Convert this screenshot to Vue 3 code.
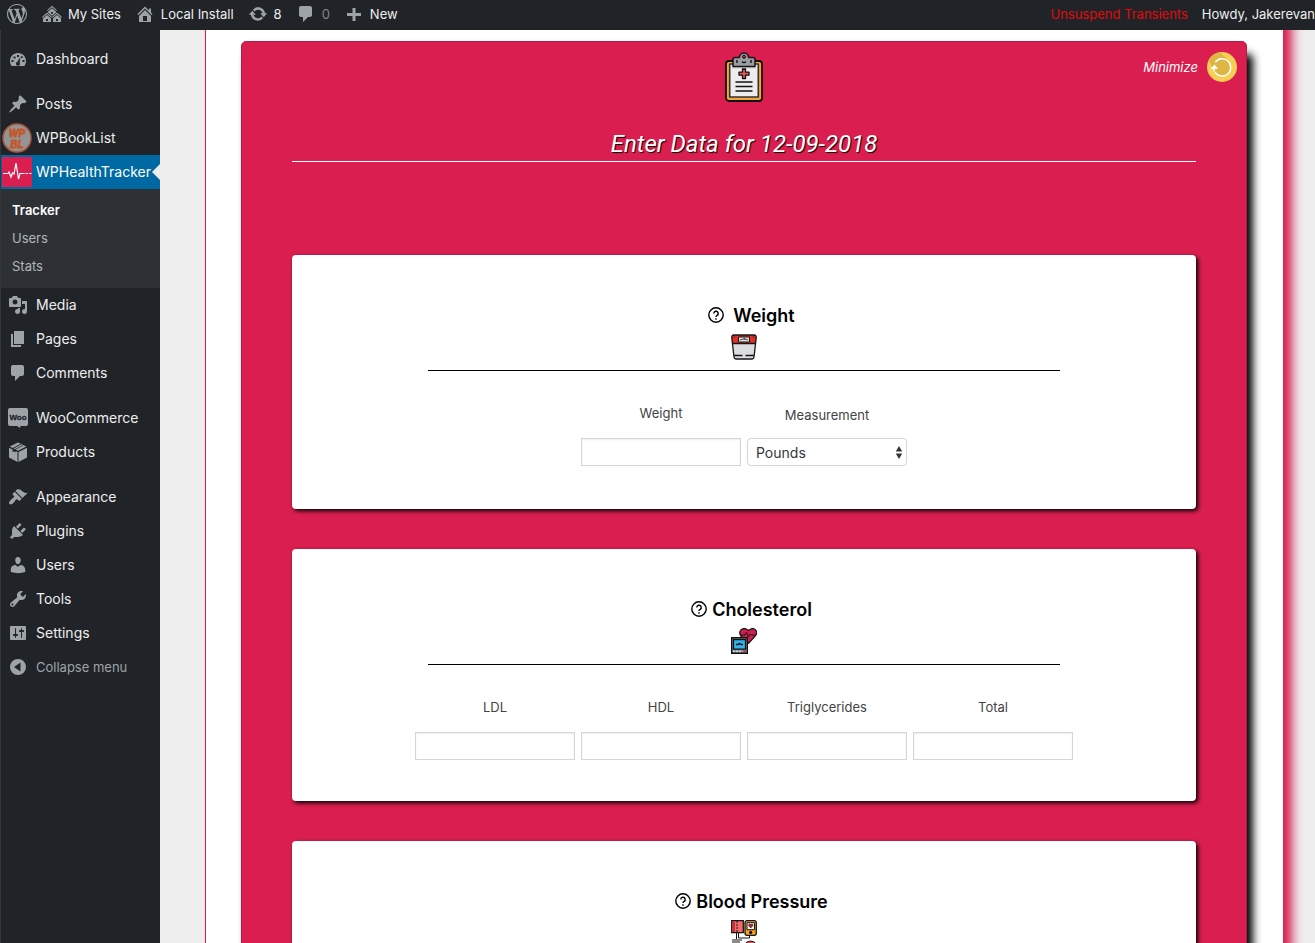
<script setup>
import { ref } from 'vue'

const paths = {
  wordpress: 'M20 10c0-5.51-4.49-10-10-10C4.48 0 0 4.49 0 10c0 5.52 4.48 10 10 10 5.51 0 10-4.48 10-10zM7.78 15.37L4.37 6.22c.55-.02 1.17-.08 1.17-.08.5-.06.44-1.13-.06-1.11 0 0-1.45.11-2.37.11-.18 0-.37 0-.58-.01C4.12 2.69 6.87 1.11 10 1.11c2.33 0 4.45.87 6.05 2.34-.68-.11-1.65.39-1.65 1.58 0 .74.45 1.36.9 2.1.35.61.55 1.36.55 2.46 0 1.49-1.4 5-1.4 5l-3.03-8.37c.54-.02.82-.17.82-.17.5-.05.44-1.25-.06-1.22 0 0-1.44.12-2.38.12-.87 0-2.33-.12-2.33-.12-.5-.03-.56 1.2-.06 1.22l.92.08 1.26 3.41zM17.41 10c.24-.64.74-1.87.43-4.25.7 1.29 1.05 2.71 1.05 4.25 0 3.29-1.73 6.24-4.4 7.78.97-2.59 1.94-5.2 2.92-7.78zM6.1 18.09C3.12 16.65 1.11 13.53 1.11 10c0-1.3.23-2.48.72-3.59C3.25 10.3 4.67 14.2 6.1 18.09zm4.03-6.63l2.58 6.98c-.86.29-1.76.45-2.71.45-.79 0-1.57-.11-2.29-.33.81-2.38 1.62-4.74 2.42-7.1z',
  sites: 'M14.27 6.87L10 3.14 5.73 6.87 5 6.14l5-4.38 5 4.38zM14 8.42l-4.05 3.43L6 8.38v-.74l4-3.5 4 3.5v.78zM11 9.7V8H9v1.7h2zm-1.73 4.03L5 10 .73 13.73 0 13l5-4.38L10 13zm10 0L15 10l-4.27 3.73L10 13l5-4.38L20 13zM5 11l4 3.5V18H1v-3.5zm10 0l4 3.5V18h-8v-3.5zm-9 6v-2H4v2h2zm10 0v-2h-2v2h2z',
  home: 'M16 8.5l1.53 1.53-1.06 1.06L10 4.6l-6.47 6.49-1.06-1.06L10 2.5l4 4v-2h2v4zm-6-2.46l6 5.99V18H4v-5.97zM12 17v-5H8v5h4z',
  update: 'M10.2 3.28c3.53 0 6.43 2.61 6.92 6h2.08l-3.5 4-3.5-4h2.32c-.45-1.97-2.21-3.45-4.32-3.45-1.45 0-2.73.71-3.54 1.78L4.95 5.66C6.23 4.2 8.11 3.28 10.2 3.28zm-.4 13.44c-3.52 0-6.43-2.61-6.92-6H.8l3.5-4c1.17 1.33 2.33 2.67 3.5 4H5.48c.45 1.97 2.21 3.45 4.32 3.45 1.45 0 2.73-.71 3.54-1.78l1.71 1.95c-1.28 1.46-3.15 2.38-5.25 2.38z',
  comments: 'M5 2h9c1.1 0 2 .9 2 2v7c0 1.1-.9 2-2 2h-2l-5 5v-5H5c-1.1 0-2-.9-2-2V4c0-1.1.9-2 2-2z',
  plus: 'M17 9v3h-5.500v5h-3v-5H3V9h5.500V4h3v5z',
  dashboard: 'M3.760 17h12.480c1.100-1.370 1.760-3.110 1.760-5 0-4.420-3.580-8-8-8s-8 3.580-8 8c0 1.890.66 3.630 1.760 5zM9 6h2v2H9zM5.500 7.600h2v2h-2zM12.900 7.300h1.800v1.800h-1.800zM3.500 11h2v2h-2zM14.500 11h2v2h-2zM12.300 8l-.6 5.700a2 2 0 1 1-2.300-.9z',
  posts: 'M10.44 3.02l1.82-1.82 6.36 6.35-1.83 1.82c-1.05-.68-2.48-.57-3.41.36l-.75.75c-.92.93-1.04 2.35-.35 3.41l-1.83 1.82-2.41-2.41-2.8 2.79c-.42.42-3.38 2.71-3.8 2.29s1.86-3.39 2.28-3.81l2.79-2.79L4.1 9.36l1.83-1.82c1.05.69 2.48.57 3.4-.36l.75-.75c.93-.92 1.05-2.35.36-3.41z',
  media: 'M13 11V4c0-.55-.45-1-1-1h-1.67L9 1H5L3.67 3H2c-.55 0-1 .45-1 1v7c0 .55.45 1 1 1h10c.55 0 1-.45 1-1zM7 4.5c1.38 0 2.5 1.12 2.5 2.5S8.38 9.5 7 9.5 4.5 8.38 4.5 7 5.62 4.5 7 4.5zM14 6h5v10.5c0 1.38-1.12 2.5-2.5 2.5S14 17.88 14 16.5s1.12-2.5 2.5-2.5c.17 0 .34.02.5.05V9h-3V6zm-4 8.05V13h2v3.5c0 1.38-1.12 2.5-2.5 2.5S7 17.88 7 16.5 8.12 14 9.5 14c.17 0 .34.02.5.05z',
  pages: 'M6 15V2h10v13H6zm-1 1h8v2H3V5h2v11z',
  products: 'M10 .5l8.300 4.100L10 8.800 7.700 7.600l7.600-4-.9-.4-7.600 4-1.200-.6 7.600-4-.9-.5-7.600 4L1.700 4.600zM1 5.700l3.600 1.800v2.700l1.300-.9 1.300.9.900-.9 1.400.7V20L1 15.500zM19 5.700v9.800L10.500 20v-10z',
  appearance: 'M14.48 11.06L7.41 3.99l1.5-1.5c.5-.56 2.3-.47 3.51.32 1.21.8 1.43 1.28 2.91 2.1 1.18.64 2.45 1.26 4.45.85zm-.71.71L6.7 4.7 4.93 6.47c-.39.39-.39 1.02 0 1.41l1.06 1.06c.39.39.39 1.03 0 1.42-.6.6-1.43 1.11-2.21 1.69-.35.26-.7.53-1.01.84C1.43 14.23.4 16.08 1.4 17.07c.99 1 2.84-.03 4.18-1.36.31-.31.58-.66.85-1.02.57-.78 1.08-1.61 1.69-2.21.39-.39 1.02-.39 1.41 0l1.06 1.06c.39.39 1.02.39 1.41 0z',
  plugins: 'M13.11 4.36L9.87 7.6 8 5.73l3.24-3.24c.35-.34 1.05-.2 1.56.32.52.51.66 1.21.31 1.55zm-8 1.77l.91-1.12 9.01 9.01-1.19.84c-.71.71-2.63 1.16-3.82 1.16H6.14L4.9 17.26c-.59.59-1.54.59-2.12 0-.59-.58-.59-1.53 0-2.12l1.24-1.24v-3.88c0-1.13.4-3.19 1.09-3.89zm7.26 3.97l3.24-3.24c.34-.35 1.04-.21 1.55.31.52.51.66 1.21.31 1.55l-3.24 3.25z',
  users: 'M10 9.25c-2.27 0-2.73-3.44-2.73-3.44C7 4.02 7.82 2 9.97 2c2.16 0 2.98 2.02 2.71 3.81 0 0-.41 3.44-2.68 3.44zm0 2.57L12.72 10c2.39 0 4.52 2.33 4.52 4.53v2.49s-3.65 1.13-7.24 1.13c-3.65 0-7.24-1.13-7.24-1.13v-2.49c0-2.25 1.94-4.48 4.47-4.48z',
  tools: 'M16.68 9.77c-1.34 1.34-3.3 1.67-4.95.99l-5.41 6.52c-.99.99-2.59.99-3.58 0s-.99-2.59 0-3.57l6.52-5.42c-.68-1.65-.35-3.61.99-4.95 1.28-1.28 3.12-1.62 4.72-1.06l-2.89 2.89 2.82 2.82 2.86-2.87c.53 1.58.18 3.39-1.08 4.65zM3.81 16.21c.4.39 1.04.39 1.43 0 .4-.4.4-1.04 0-1.43-.39-.4-1.03-.4-1.43 0-.39.39-.39 1.03 0 1.43z',
  settings: 'M18 16V4c0-.55-.45-1-1-1H3c-.55 0-1 .45-1 1v12c0 .55.45 1 1 1h14c.55 0 1-.45 1-1zM8 11h1c.55 0 1 .45 1 1s-.45 1-1 1H8v1.5c0 .28-.22.5-.5.5s-.5-.22-.5-.5V13H6c-.55 0-1-.45-1-1s.45-1 1-1h1V5.5c0-.28.22-.5.5-.5s.5.22.5.5V11zm5-2h-1c-.55 0-1-.45-1-1s.45-1 1-1h1V5.5c0-.28.22-.5.5-.5s.5.22.5.5V7h1c.55 0 1 .45 1 1s-.45 1-1 1h-1v5.5c0 .28-.22.5-.5.5s-.5-.22-.5-.5V9z',
  collapse: 'M10 2a8 8 0 1 0 0 16 8 8 0 0 0 0-16zM12.500 5.500v9L6 10z',
}

const menu = [
  [{ label: 'Dashboard', icon: 'dashboard' }],
  [
    { label: 'Posts', icon: 'posts' },
    { label: 'WPBookList', icon: 'booklist' },
    { label: 'WPHealthTracker', icon: 'health', sub: ['Tracker', 'Users', 'Stats'] },
    { label: 'Media', icon: 'media' },
    { label: 'Pages', icon: 'pages' },
    { label: 'Comments', icon: 'comments' },
  ],
  [
    { label: 'WooCommerce', icon: 'woo' },
    { label: 'Products', icon: 'products' },
  ],
  [
    { label: 'Appearance', icon: 'appearance' },
    { label: 'Plugins', icon: 'plugins' },
    { label: 'Users', icon: 'users' },
    { label: 'Tools', icon: 'tools' },
    { label: 'Settings', icon: 'settings' },
  ],
]

const lipids = ref([
  { id: 'ldl', label: 'LDL', value: '' },
  { id: 'hdl', label: 'HDL', value: '' },
  { id: 'triglycerides', label: 'Triglycerides', value: '' },
  { id: 'total', label: 'Total', value: '' },
])
const weight = ref('')
const unit = ref('Pounds')
</script>

<template>
  <div class="page">
    <header class="adminbar">
      <nav class="bar-group" aria-label="Toolbar">
        <a href="#" class="bar-item logo" aria-label="WordPress"><svg class="glyph" viewBox="0 0 20 20"><path :d="paths.wordpress" /></svg></a>
        <a href="#" class="bar-item"><svg class="glyph" viewBox="0 0 20 20"><path :d="paths.sites" /></svg>My Sites</a>
        <a href="#" class="bar-item"><svg class="glyph" viewBox="0 0 20 20"><path :d="paths.home" /></svg>Local Install</a>
        <a href="#" class="bar-item"><svg class="glyph" viewBox="0 0 20 20"><path :d="paths.update" /></svg>8</a>
        <a href="#" class="bar-item faded"><svg class="glyph" viewBox="0 0 20 20"><path :d="paths.comments" /></svg>0</a>
        <a href="#" class="bar-item"><svg class="glyph" viewBox="0 0 20 20"><path :d="paths.plus" /></svg>New</a>
      </nav>
      <nav class="bar-group" aria-label="Account">
        <a href="#" class="bar-item alert">Unsuspend Transients</a>
        <a href="#" class="bar-item account">Howdy, Jakerevan</a>
      </nav>
    </header>

    <div class="body">
      <aside class="sidebar">
        <ul v-for="(group, g) in menu" :key="g" class="menu">
          <li v-for="item in group" :key="item.label">
            <a href="#" class="menu-item" :class="{ active: item.sub }">
              <span class="menu-icon">
                <svg v-if="item.icon === 'booklist'" class="badge" viewBox="0 0 30 30">
                  <circle cx="15" cy="15" r="14" fill="#929496" stroke="#a9583a" stroke-width="1.500" />
                  <g fill="#c5562a" stroke="#c5562a" stroke-width=".8" font-family="Liberation Sans, sans-serif" font-size="10" font-weight="bold" font-style="italic" text-anchor="middle">
                    <text x="15" y="13.500">WP</text>
                    <text x="15" y="25">BL</text>
                  </g>
                </svg>
                <svg v-else-if="item.icon === 'health'" class="badge" viewBox="0 0 30 30">
                  <rect width="30" height="30" fill="#da1f50" />
                  <path d="M1 16.500h5l1-1.500 2 5 1.500-4 1.500 1 2-11 2.500 16 1.500-5.500h2" fill="none" stroke="#fff" stroke-width="1.200" />
                  <path d="M20 16.500h10" stroke="#fff" stroke-dasharray="2.500 1" />
                </svg>
                <svg v-else-if="item.icon === 'woo'" class="glyph" viewBox="0 0 20 20">
                  <path d="M2 0h16a2 2 0 0 1 2 2v14a2 2 0 0 1-2 2h-5.500l-.5 2-3-2H2a2 2 0 0 1-2-2V2a2 2 0 0 1 2-2z" />
                  <text x="10" y="12" fill="#202428" stroke="#202428" stroke-width=".3" font-family="Liberation Sans, sans-serif" font-size="8" font-weight="bold" text-anchor="middle">Woo</text>
                </svg>
                <svg v-else class="glyph" viewBox="0 0 20 20"><path :d="paths[item.icon]" /></svg>
              </span>
              <span class="menu-label">{{ item.label }}</span>
            </a>
            <ul v-if="item.sub" class="submenu">
              <li v-for="(s, i) in item.sub" :key="s"><a href="#" :class="{ current: i === 0 }">{{ s }}</a></li>
            </ul>
          </li>
        </ul>
        <button type="button" class="menu-item collapse">
          <span class="menu-icon"><svg class="glyph" viewBox="0 0 20 20"><path :d="paths.collapse" /></svg></span>
          Collapse menu
        </button>
      </aside>

      <main class="content">
        <div class="panel">
          <form class="entry" @submit.prevent>
            <div class="entry-top">
              <svg class="clipboard" viewBox="0 0 38 50" stroke-linejoin="round">
                <rect x="1" y="9" width="36" height="40" rx="3" fill="#f3a63b" stroke="#111" stroke-width="1.800" />
                <rect x="4.700" y="12" width="28.600" height="33" fill="#ededed" stroke="#333" stroke-width="1.600" />
                <path d="M7 13h24v3.500H7z" fill="#ccc" />
                <path d="M8 14.500V7.500q0-2 2-2h4.400a4.600 4.600 0 0 1 9.200 0H28q2 0 2 2v7z" fill="#9b9ea0" stroke="#151515" stroke-width="1.500" />
                <circle cx="19" cy="4.800" r="1.500" fill="#da1f50" stroke="#111" />
                <path d="M12 8v3M26 8v3M17 9.800q2 1.500 4 0" stroke="#111" stroke-width="1.400" fill="none" />
                <path d="M17.500 17h3v3.200H24v3h-3.500v3.300h-3v-3.300H14v-3h3.500z" fill="#e8545b" stroke="#111" stroke-width="1.300" />
                <path d="M10.500 30h17M10.500 34.500h17M10.500 39h17" stroke="#111" stroke-width="1.600" />
              </svg>
              <button type="button" class="minimize">
                Minimize
                <svg class="reload" viewBox="0 0 30 30">
                  <circle cx="15" cy="15" r="15" fill="#f7cf52" />
                  <path d="M13 0.500L20 7 6.500 18 1.500 8A15 15 0 0 1 13 .5z" fill="#dfb546" />
                  <circle cx="15" cy="15" r="9" fill="#dfb546" />
                  <path d="M8.300 10.200A8.600 8.600 0 1 1 8 20.200M6.600 15.500a8.600 8.600 0 0 0 1 4" fill="none" stroke="#fff" stroke-width="1.500" />
                  <path d="M3.500 17L7.500 12.500 11 17z" fill="#fff" />
                </svg>
              </button>
            </div>
            <h1 class="entry-title">Enter Data for 12-09-2018</h1>

            <section class="card weight">
              <h2 class="card-title wide">
                <svg class="help" viewBox="0 0 16 16"><circle cx="8" cy="8" r="7.200" /><path d="M5.800 6.400a2.200 2.200 0 1 1 3.300 1.900Q8 8.900 8 10" /><path d="M8 11.300v1.500" /></svg>
                Weight
              </h2>
              <svg class="pict" viewBox="0 0 26 26" stroke-linejoin="round">
                <path d="M3 1h20q2.500 0 2.200 3L23 23q-.3 2-2 2H5q-1.700 0-2-2L.8 4Q.5 1 3 1z" fill="#dcdde0" />
                <path d="M3 1h20q2.500 0 2.200 3L24.700 9.500H1.300L.8 4Q.5 1 3 1z" fill="#df2f27" />
                <path d="M3 1h20q2.500 0 2.200 3L23 23q-.3 2-2 2H5q-1.700 0-2-2L.8 4Q.5 1 3 1zM1.500 9.500h23M3.500 21.500h8M14.500 21.500h8" fill="none" stroke="#161616" stroke-width="1.300" />
                <path d="M7.500 3h11v5h-11z" fill="#ddd" stroke="#161616" />
                <path d="M9 6q4-2.500 8 0M13 6l1-2M3 4l1-1.500M23 4l-1-1.500" fill="none" stroke="#161616" stroke-width=".7" />
              </svg>
              <hr class="rule" />
              <div class="fields">
                <div class="field">
                  <label for="weight">Weight</label>
                  <input id="weight" v-model="weight" type="text" />
                </div>
                <div class="field choice">
                  <label for="unit">Measurement</label>
                  <div class="select-wrap">
                    <select id="unit" v-model="unit"><option>Pounds</option></select>
                    <svg class="arrows" viewBox="0 0 8 14"><path d="M4 0l3.500 6h-7zM4 14L.5 8h7z" /></svg>
                  </div>
                </div>
              </div>
            </section>

            <section class="card">
              <h2 class="card-title">
                <svg class="help" viewBox="0 0 16 16"><circle cx="8" cy="8" r="7.200" /><path d="M5.800 6.400a2.200 2.200 0 1 1 3.300 1.900Q8 8.900 8 10" /><path d="M8 11.300v1.500" /></svg>
                Cholesterol
              </h2>
              <svg class="pict" viewBox="0 0 26 26">
                <path d="M17.500 15.500L9.800 8Q7.500 4.500 10 1.800q3.500-2.800 7.500.7 4-3.500 7-.6 2.500 3-.3 6.100z" fill="#d1204f" stroke="#161616" stroke-width="1.200" />
                <path d="M10 7h4l1.500-3 2 5 1.500-3 1 1h4" fill="none" stroke="#161616" />
                <path d="M.7 9.700h15.600v15.600H.7z" fill="#8e9199" stroke="#111" stroke-width="1.400" />
                <path d="M2.500 11.700h12v9.500h-12z" fill="#2fb4ee" stroke="#111" stroke-width="1.200" />
                <path d="M5 16.500h2l1.500-1 1.500 1h2" stroke="#111" stroke-width="1.500" fill="none" />
                <path d="M2 23.300h9" stroke="#eee" stroke-dasharray="2 1" /><path d="M12.500 23.300h2" stroke="#d1204f" stroke-width="2" />
              </svg>
              <hr class="rule" />
              <div class="fields">
                <div v-for="f in lipids" :key="f.id" class="field">
                  <label :for="f.id">{{ f.label }}</label>
                  <input :id="f.id" v-model="f.value" type="text" />
                </div>
              </div>
            </section>

            <section class="card">
              <h2 class="card-title">
                <svg class="help" viewBox="0 0 16 16"><circle cx="8" cy="8" r="7.200" /><path d="M5.800 6.400a2.200 2.200 0 1 1 3.300 1.900Q8 8.900 8 10" /><path d="M8 11.300v1.500" /></svg>
                Blood Pressure
              </h2>
              <svg class="pict" viewBox="0 0 26 26" stroke="#161616">
                <path d="M.7.700h11.600v12H.7z" fill="#f4696c" stroke-width="1.300" />
                <path d="M1.500 1.500h2.500v10.500H1.500z" fill="#c6303a" stroke="none" />
                <path d="M6 1v11" stroke-dasharray="2 1" />
                <path d="M5.500 13v6M7.500 13v5h11v-3" fill="none" />
                <path d="M1 20h10M1 22h8" fill="none" />
                <rect x="14" y=".7" width="11.300" height="14.600" rx="2" fill="#f6a51c" stroke-width="1.300" />
                <path d="M16 2.700h7.500v7H16z" fill="#f1f1f1" />
                <path d="M19.700 8L17.500 5.500q0-1.500 1-1.500t1.200 1q.3-1 1.300-1t1 1.500z" fill="#b61f32" stroke-width=".5" />
                <circle cx="19.700" cy="12.500" r="1.200" />
                <path d="M14 25q1-4 5.500-4t6 4z" fill="#e84b50" />
              </svg>
              <hr class="rule" />
            </section>
          </form>
        </div>
      </main>
    </div>
  </div>
</template>

<style>
body {
  background: #eee;
}
</style>

<style scoped>
.page {
  height: 100vh;
  display: flex;
  flex-direction: column;
  overflow: hidden;
  font-family: Inter, "Liberation Sans", sans-serif;
  font-size: 13px;
  color: #444;
}
a {
  color: inherit;
  text-decoration: none;
}
button {
  border: 0;
  background: none;
  padding: 0;
  font: inherit;
  cursor: pointer;
}
ul {
  list-style: none;
  margin: 0;
  padding: 0;
}
.glyph {
  width: 20px;
  height: 20px;
  fill: #9ea3a8;
  fill-rule: evenodd;
  flex: none;
}

.adminbar {
  flex: none;
  height: 30px;
  display: flex;
  justify-content: space-between;
  background: #202428;
  color: #eee;
  white-space: nowrap;
}
.bar-group {
  display: flex;
}
.bar-item {
  display: flex;
  align-items: center;
  gap: 6px;
  padding: 0 7px 2px;
}
.bar-item.logo {
  padding-right: 8px;
}
.bar-item.faded {
  color: #83878b;
}
.bar-item.alert {
  color: #e00808;
}
.bar-item.account {
  padding-right: 0;
}

.body {
  flex: 1;
  min-height: 0;
  display: flex;
}
.sidebar {
  flex: none;
  box-sizing: border-box;
  width: 160px;
  padding-top: 12px;
  border-left: 1px solid #34383d;
  background: #202428;
  color: #eee;
}
.menu + .menu {
  margin-top: 11px;
}
.menu-item {
  position: relative;
  display: flex;
  align-items: center;
  height: 34px;
  font-size: 14px;
}
.menu-label {
  padding-bottom: 2px;
}
.menu-icon {
  width: 35px;
  display: flex;
  justify-content: center;
  flex: none;
}
.menu-icon .glyph {
  margin-right: 1px;
}
.badge {
  width: 30px;
  height: 30px;
  margin-right: 3px;
}
.menu-item.active {
  background: #0069a3;
  color: #fff;
}
.menu-item.active::after {
  content: "";
  position: absolute;
  right: 0;
  border: 8px solid transparent;
  border-right-color: #eee;
  border-left: 0;
}
.submenu {
  padding: 7px 0 8px;
  background: #2d3136;
}
.submenu a {
  display: block;
  padding-left: 11px;
  line-height: 28px;
  color: #b1b5b9;
}
.submenu a.current {
  color: #fff;
  font-weight: 600;
}
.collapse {
  width: 100%;
  font-size: 13px;
  color: #9ea3a8;
}

.content {
  flex: 1;
  min-width: 0;
  padding: 0 32px 0 45px;
  overflow: hidden;
}
.panel {
  padding: 11px 36px 40px 35px;
  border-left: 1px solid #da1f50;
  background: #fff;
  box-shadow: 9px -10px 10px #da1f50;
}
.entry {
  box-sizing: border-box;
  padding-bottom: 40px;
  border: 1px solid #b41a46;
  border-radius: 5px;
  background: #da1f50;
  box-shadow: 6px 13px 8px #000;
}
.entry-top {
  display: grid;
  grid-template-columns: 1fr auto 1fr;
  align-items: start;
  padding: 10px 9px 0;
}
.clipboard {
  grid-column: 2;
  width: 38px;
  height: 50px;
}
.minimize {
  justify-self: end;
  display: flex;
  align-items: center;
  gap: 9px;
  color: #fff;
  font-style: italic;
}
.reload {
  width: 30px;
  height: 30px;
}
.entry-title {
  width: 90%;
  margin: 26px auto 93px;
  border-bottom: 1px solid #fff;
  color: #fff;
  font-family: Roboto, "Liberation Sans", sans-serif;
  font-size: 24px;
  font-style: italic;
  font-weight: 400;
  line-height: 33px;
  text-align: center;
  text-shadow: 1px 1px 1px #000;
}
.card {
  box-sizing: border-box;
  width: 90%;
  margin: 0 auto 40px;
  padding: 48px 0 41px;
  border-radius: 4px;
  background: #fff;
  box-shadow: 2px 2px 4px #000;
  display: flex;
  flex-direction: column;
  align-items: center;
}
.card.weight {
  padding-bottom: 43px;
}
.card-title {
  display: flex;
  align-items: center;
  gap: 5px;
  margin: 0;
  padding-left: 15px;
  color: #000;
  font-size: 18px;
  font-weight: 600;
  line-height: 26px;
}
.card-title.wide {
  gap: 9px;
}
.help {
  width: 16px;
  height: 16px;
  margin-bottom: 2px;
  fill: none;
  stroke: #000;
  stroke-width: 1.4;
}
.pict {
  width: 26px;
  height: 26px;
  margin: 5px 0 10px;
}
.rule {
  width: 70%;
  margin: 0;
  border: 0;
  border-top: 1px solid #000;
}
.fields {
  display: flex;
  justify-content: center;
  align-items: flex-end;
  gap: 6px;
  padding-top: 33px;
}
.field {
  width: 160px;
  display: flex;
  flex-direction: column;
  gap: 16px;
  text-align: center;
  line-height: 18px;
}
.field.choice {
  gap: 14px;
}
input,
select {
  box-sizing: border-box;
  width: 100%;
  height: 28px;
  margin: 0;
  padding: 0 8px;
  border: 1px solid #d5d5d5;
  background: #fff;
  box-shadow: inset 0 1px 2px rgba(0, 0, 0, 0.07);
  color: #32373c;
  font-family: inherit;
  font-size: 14px;
}
select {
  display: block;
  appearance: none;
  border-radius: 4px;
  box-shadow: none;
}
.select-wrap {
  position: relative;
}
.arrows {
  position: absolute;
  top: 8px;
  right: 4px;
  width: 8px;
  height: 13px;
  fill: #32373c;
  pointer-events: none;
}
</style>
